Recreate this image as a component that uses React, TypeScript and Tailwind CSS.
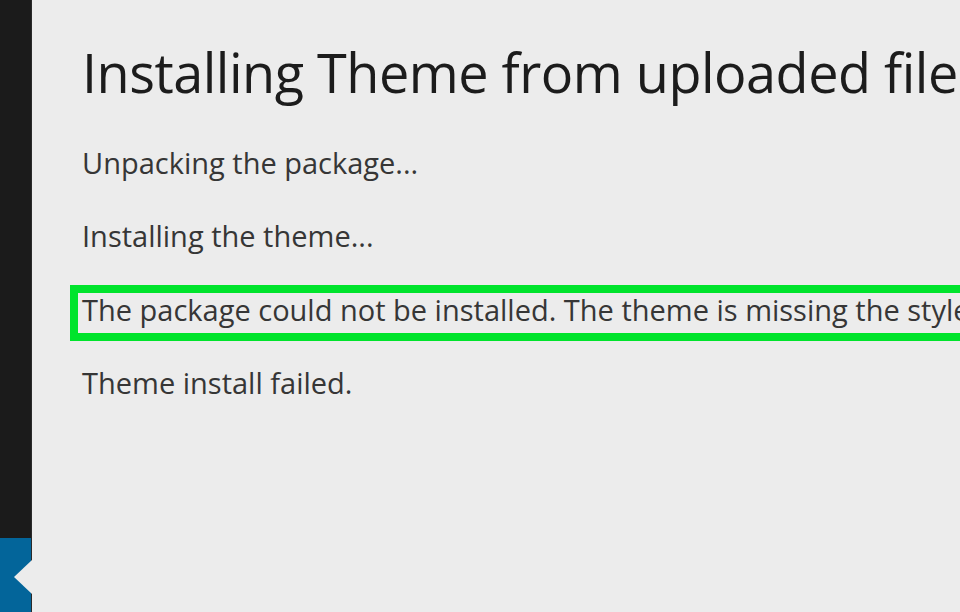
import React from "react";

const App: React.FC = () => {
  return (
    <div className="flex h-[612px] w-[960px] overflow-hidden bg-[#ececec] font-['Open_Sans',sans-serif]">
      {/* admin sidebar strip */}
      <div className="flex w-[32px] shrink-0 flex-col border-r border-[#2a2a2a] bg-[#1b1b1b]">
        <div className="flex-1" />
        <div className="relative h-[74px] bg-[#03659a]">
          <div className="absolute top-[22px] right-[-1px] h-0 w-0 border-y-[17px] border-r-[18px] border-y-transparent border-r-[#ececec]" />
        </div>
      </div>

      {/* content */}
      <div className="flex-1 overflow-hidden pt-[45px] pl-[50px]">
        <h1 className="whitespace-nowrap text-[54px] leading-[54px] font-normal tracking-[-0.5px] text-[#1c1c1c]">
          Installing Theme from uploaded file
        </h1>

        <p className="mt-[49px] whitespace-nowrap text-[29px] leading-[29px] text-[#363636]">
          Unpacking the package...
        </p>
        <p className="mt-[44px] whitespace-nowrap text-[29px] leading-[29px] text-[#363636]">
          Installing the theme...
        </p>

        <div className="mt-[35px] ml-[-12px] w-[1000px] border-[8px] border-[#00e42c] pt-[2px] pb-[9px] pl-[4px]">
          <p className="whitespace-nowrap text-[29px] leading-[29px] text-[#363636]">
            The package could not be installed. The theme is missing the style.css stylesheet.
          </p>
        </div>

        <p className="mt-[27px] whitespace-nowrap text-[29px] leading-[29px] text-[#363636]">
          Theme install failed.
        </p>
      </div>
    </div>
  );
};

export default App;
